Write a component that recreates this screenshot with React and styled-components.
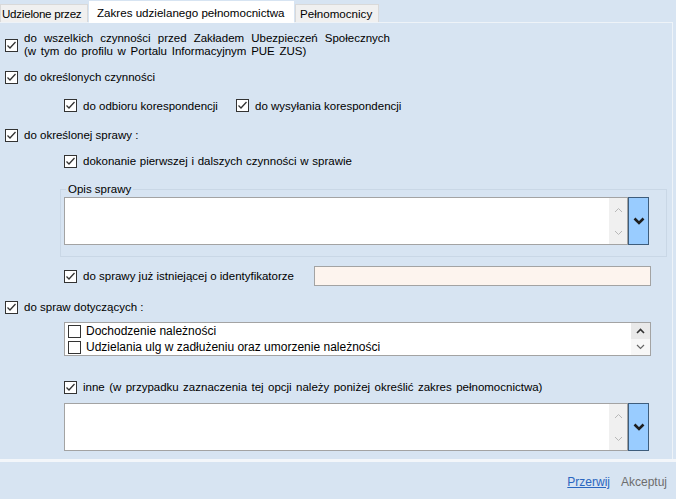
import React from "react";
import styled, { createGlobalStyle } from "styled-components";

const GlobalStyle = createGlobalStyle`
  html, body {
    margin: 0;
    padding: 0;
    background: #d7e4f2;
  }
  body {
    font-family: "Liberation Sans", Arial, sans-serif;
    font-size: 11.5px;
    color: #000;
  }
`;

const Window = styled.div`
  width: 676px;
  height: 499px;
  display: flex;
  flex-direction: column;
  background: #d7e4f2;
  overflow: hidden;
`;

const TabStrip = styled.div`
  height: 22px;
  display: flex;
  align-items: flex-end;
`;

const Tab = styled.div`
  box-sizing: border-box;
  width: ${(p) => p.$w}px;
  height: ${(p) => (p.$active ? 22 : 18)}px;
  margin-left: ${(p) => p.$ml || 0}px;
  margin-bottom: ${(p) => (p.$active ? -1 : 0)}px;
  padding-left: ${(p) => p.$pl}px;
  background: ${(p) => (p.$active ? "#fff" : "#f0f0f0")};
  border: 1px solid ${(p) => (p.$active ? "#fff" : "#d9d9d9")};
  border-bottom: none;
  display: flex;
  align-items: center;
  font-size: 11.6px;
  letter-spacing: ${(p) => p.$ls || 0}px;
  white-space: nowrap;
  overflow: hidden;
  position: relative;
  z-index: ${(p) => (p.$active ? 2 : 1)};
`;

const Panel = styled.div`
  box-sizing: border-box;
  width: 673px;
  height: 437px;
  border-top: 1px solid #eef3f8;
  border-right: 1px solid #eef3f8;
  display: flex;
  flex-direction: column;
  align-items: flex-start;
`;

const CheckRow = styled.label`
  display: flex;
  align-items: center;
  gap: 6px;
  min-height: 15px;
  line-height: 13px;
  margin-top: ${(p) => p.$mt}px;
  margin-left: ${(p) => p.$ml}px;
  white-space: nowrap;
  word-spacing: ${(p) => p.$ws || 0}px;
`;

const CheckItem = styled.span`
  display: flex;
  align-items: center;
  gap: 6px;
  width: ${(p) => (p.$w ? `${p.$w}px` : "auto")};
`;

const Inline = styled.div`
  display: flex;
  align-items: center;
  margin-top: ${(p) => p.$mt}px;
  margin-left: ${(p) => p.$ml}px;
  min-height: 15px;
  white-space: nowrap;
`;

const TwoLines = styled.span`
  display: flex;
  flex-direction: column;
  width: 366px;
`;

const JustLine = styled.span`
  display: block;
  white-space: normal;
  text-align: ${(p) => (p.$justify ? "justify" : "left")};
  text-align-last: ${(p) => (p.$justify ? "justify" : "left")};
  word-spacing: 1.5px;
`;

const Box = styled.span`
  box-sizing: border-box;
  flex: none;
  width: 13px;
  height: 13px;
  border: 1px solid #333;
  background: #fff;
  display: flex;
  align-items: center;
  justify-content: center;
`;

const Group = styled.fieldset`
  box-sizing: border-box;
  width: 607px;
  margin: 14px 0 0 60px;
  padding: 2px 0 11px 3px;
  border: 1px solid #c9d7e6;
  min-inline-size: 0;
`;

const Legend = styled.legend`
  padding: 0 2px;
  margin-left: 2px;
  font-size: 11.5px;
  line-height: 12px;
`;

const Memo = styled.div`
  display: flex;
  width: 585px;
  height: 48px;
  margin-top: ${(p) => p.$mt || 0}px;
  margin-left: ${(p) => p.$ml || 0}px;
`;

const MemoBox = styled.div`
  box-sizing: border-box;
  flex: 1;
  display: flex;
  justify-content: flex-end;
  background: #fff;
  border: 1px solid #a3a3a3;
`;

const ScrollCol = styled.div`
  width: ${(p) => p.$w}px;
  display: flex;
  flex-direction: column;
  background: ${(p) => p.$bg};
`;

const ScrollBtn = styled.div`
  flex: 1;
  display: flex;
  align-items: center;
  justify-content: center;
  background: ${(p) => p.$bg || "transparent"};
`;

const DropButton = styled.div`
  box-sizing: border-box;
  width: 21px;
  background: #99ccff;
  border: 1px solid #3e5d7c;
  display: flex;
  align-items: center;
  justify-content: center;
`;

const IdRow = styled.div`
  display: flex;
  align-items: center;
  width: 587px;
  height: 20px;
  margin-top: 9px;
  margin-left: 64px;
  white-space: nowrap;
`;

const IdInput = styled.div`
  box-sizing: border-box;
  width: 337px;
  height: 20px;
  margin-left: auto;
  background: #fdf4ee;
  border: 1px solid #a3a3a3;
`;

const ListBox = styled.div`
  box-sizing: border-box;
  display: flex;
  width: 587px;
  height: 34px;
  margin-top: 7px;
  margin-left: 64px;
  background: #fff;
  border: 1px solid #a3a3a3;
`;

const ListItems = styled.div`
  flex: 1;
  padding: 0 0 0 3px;
`;

const ListItem = styled.div`
  height: 16px;
  display: flex;
  align-items: center;
  gap: 5px;
  font-size: 12px;
  white-space: nowrap;
`;

const Separator = styled.div`
  height: 3px;
  background: #f3f6fa;
`;

const Footer = styled.div`
  flex: 1;
  display: flex;
  align-items: center;
  justify-content: flex-end;
  gap: 11px;
  padding: 3px 9px 0 0;
  font-size: 12px;
`;

const Link = styled.span`
  color: ${(p) => (p.$disabled ? "#6d6d6d" : "#2a66c0")};
  text-decoration: ${(p) => (p.$disabled ? "none" : "underline")};
`;

const Check = ({ checked = true }) => (
  <Box>
    {checked && (
      <svg width="11" height="11" viewBox="0 0 11 11">
        <polyline
          points="1.5,5.5 4,8 9.5,2"
          fill="none"
          stroke="#333"
          strokeWidth="1.3"
        />
      </svg>
    )}
  </Box>
);

const Chevron = ({ up, color = "#b8b8b8", width = 1 }) => (
  <svg width="9" height="6" viewBox="0 0 9 6">
    <polyline
      points={up ? "1,5 4.5,1.5 8,5" : "1,1 4.5,4.5 8,1"}
      fill="none"
      stroke={color}
      strokeWidth={width}
    />
  </svg>
);

const BigChevron = () => (
  <svg width="12" height="8" viewBox="0 0 12 8">
    <polyline
      points="1.5,1.5 6,6 10.5,1.5"
      fill="none"
      stroke="#1e1e1e"
      strokeWidth="2.6"
    />
  </svg>
);

const MemoField = (props) => (
  <Memo {...props}>
    <MemoBox>
      <ScrollCol $w={18} $bg="#f0f0f0">
        <ScrollBtn>
          <Chevron up />
        </ScrollBtn>
        <ScrollBtn>
          <Chevron />
        </ScrollBtn>
      </ScrollCol>
    </MemoBox>
    <DropButton>
      <BigChevron />
    </DropButton>
  </Memo>
);

export default function App() {
  return (
    <Window>
      <GlobalStyle />
      <TabStrip>
        <Tab $w={88} $pl={1} $ls={-0.25}>Udzielone przez</Tab>
        <Tab $w={205} $ml={1} $pl={7} $active>
          Zakres udzielanego pełnomocnictwa
        </Tab>
        <Tab $w={84} $ml={1} $pl={4}>Pełnomocnicy</Tab>
      </TabStrip>

      <Panel>
        <CheckRow $mt={9} $ml={5}>
          <Check />
          <TwoLines>
            <JustLine $justify>
              do wszelkich czynności przed Zakładem Ubezpieczeń Społecznych
            </JustLine>
            <JustLine>(w tym do profilu w Portalu Informacyjnym PUE ZUS)</JustLine>
          </TwoLines>
        </CheckRow>

        <CheckRow $mt={12} $ml={5}>
          <Check />
          do określonych czynności
        </CheckRow>

        <Inline $mt={13} $ml={64}>
          <CheckItem $w={172}>
            <Check />
            do odbioru korespondencji
          </CheckItem>
          <CheckItem>
            <Check />
            do wysyłania korespondencji
          </CheckItem>
        </Inline>

        <CheckRow $mt={15} $ml={5}>
          <Check />
          do określonej sprawy :
        </CheckRow>

        <CheckRow $mt={11} $ml={64} $ws={0.5}>
          <Check />
          dokonanie pierwszej i dalszych czynności w sprawie
        </CheckRow>

        <Group>
          <Legend>Opis sprawy</Legend>
          <MemoField />
        </Group>

        <IdRow>
          <CheckItem>
            <Check />
            do sprawy już istniejącej o identyfikatorze
          </CheckItem>
          <IdInput />
        </IdRow>

        <CheckRow $mt={14} $ml={5}>
          <Check />
          do spraw dotyczących :
        </CheckRow>

        <ListBox>
          <ListItems>
            <ListItem>
              <Check checked={false} />
              Dochodzenie należności
            </ListItem>
            <ListItem>
              <Check checked={false} />
              Udzielania ulg w zadłużeniu oraz umorzenie należności
            </ListItem>
          </ListItems>
          <ScrollCol $w={19} $bg="#fff">
            <ScrollBtn $bg="#e9e9e9">
              <Chevron up color="#333" width={1.6} />
            </ScrollBtn>
            <ScrollBtn $bg="#f7f7f7">
              <Chevron color="#666" width={1.2} />
            </ScrollBtn>
          </ScrollCol>
        </ListBox>

        <CheckRow $mt={24} $ml={64} $ws={1.2}>
          <Check />
          inne (w przypadku zaznaczenia tej opcji należy poniżej określić zakres
          pełnomocnictwa)
        </CheckRow>

        <MemoField $mt={8} $ml={64} />
      </Panel>

      <Separator />

      <Footer>
        <Link>Przerwij</Link>
        <Link $disabled>Akceptuj</Link>
      </Footer>
    </Window>
  );
}
